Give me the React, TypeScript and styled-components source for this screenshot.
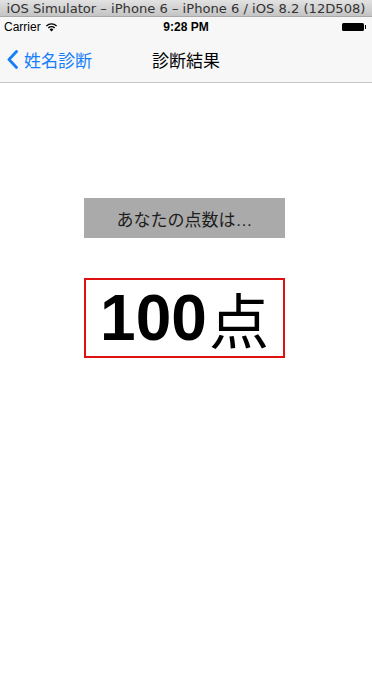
import styled, { createGlobalStyle } from "styled-components";

const GlobalStyle = createGlobalStyle`
  html, body {
    margin: 0;
    padding: 0;
    background: #ffffff;
  }
  body {
    font-family: "Liberation Sans", "Noto Sans CJK JP", sans-serif;
  }
`;

const Screen = styled.div`
  width: 372px;
  height: 684px;
  display: flex;
  flex-direction: column;
  overflow: hidden;
  background: #ffffff;
`;

const TitleBar = styled.div`
  height: 16px;
  display: flex;
  align-items: center;
  justify-content: center;
  background: linear-gradient(#e2e2e2, #c4c4c4);
  border-bottom: 1px solid #a8a8a8;
  font-family: "DejaVu Sans", sans-serif;
  font-size: 13.1px;
  color: #333333;
  white-space: nowrap;
`;

const Header = styled.div`
  background: #f7f7f7;
  border-bottom: 1px solid #c8c8c8;
`;

const StatusBar = styled.div`
  height: 20px;
  display: grid;
  grid-template-columns: 1fr auto 1fr;
  align-items: center;
  padding: 0 4px;
  font-size: 12px;
  color: #000000;
`;

const Carrier = styled.div`
  display: flex;
  align-items: center;
  gap: 4px;
`;

const Clock = styled.div`
  font-weight: bold;
`;

const Battery = styled.div`
  justify-self: end;
  display: flex;
  align-items: center;
  margin-right: 2px;
`;

const BatteryBody = styled.div`
  width: 22px;
  height: 8px;
  background: #000000;
  border-radius: 1.5px;
`;

const BatteryTip = styled.div`
  width: 1.5px;
  height: 4px;
  background: #000000;
  margin-left: 1px;
`;

const NavBar = styled.div`
  height: 45px;
  display: grid;
  grid-template-columns: 1fr auto 1fr;
  align-items: center;
`;

const BackButton = styled.div`
  display: flex;
  align-items: center;
  gap: 6px;
  padding-left: 7px;
  color: #157efb;
  font-size: 17px;
`;

const NavTitle = styled.div`
  font-size: 17px;
  color: #000000;
`;

const Content = styled.div`
  display: flex;
  flex-direction: column;
  align-items: center;
  padding-top: 115px;
  padding-right: 3px;
  gap: 40px;
`;

const Banner = styled.div`
  width: 201px;
  height: 40px;
  display: flex;
  align-items: center;
  justify-content: center;
  background: #aaaaaa;
  color: #1e1e1e;
  font-size: 17px;
`;

const ScoreBox = styled.div`
  width: 197px;
  height: 76px;
  display: flex;
  align-items: center;
  justify-content: center;
  border: 2px solid #e01010;
  font-size: 64px;
  font-weight: bold;
  color: #000000;
  line-height: 1;
`;

const Unit = styled.span`
  font-weight: 400;
  font-size: 60px;
  font-family: "Noto Sans CJK JP", sans-serif;
  margin-left: 2px;
`;

export default function App() {
  return (
    <Screen>
      <GlobalStyle />
      <TitleBar>iOS Simulator – iPhone 6 – iPhone 6 / iOS 8.2 (12D508)</TitleBar>
      <Header>
        <StatusBar>
          <Carrier>
            Carrier
            <svg width="13" height="10" viewBox="0 0 13 10">
              <path d="M6.5 9.5 L4.6 7.4 A2.8 2.8 0 0 1 8.4 7.4 Z" fill="#000" />
              <path d="M3.3 6 A4.6 4.6 0 0 1 9.7 6" stroke="#000" strokeWidth="1.3" fill="none" />
              <path d="M1.4 4 A7.4 7.4 0 0 1 11.6 4" stroke="#000" strokeWidth="1.3" fill="none" />
            </svg>
          </Carrier>
          <Clock>9:28 PM</Clock>
          <Battery>
            <BatteryBody />
            <BatteryTip />
          </Battery>
        </StatusBar>
        <NavBar>
          <BackButton>
            <svg width="11" height="19" viewBox="0 0 11 19">
              <path d="M9.5 1.5 L2 9.5 L9.5 17.5" stroke="#157efb" strokeWidth="2.8" fill="none" strokeLinecap="round" strokeLinejoin="round" />
            </svg>
            姓名診断
          </BackButton>
          <NavTitle>診断結果</NavTitle>
          <div />
        </NavBar>
      </Header>
      <Content>
        <Banner>あなたの点数は…</Banner>
        <ScoreBox>
          100<Unit>点</Unit>
        </ScoreBox>
      </Content>
    </Screen>
  );
}
